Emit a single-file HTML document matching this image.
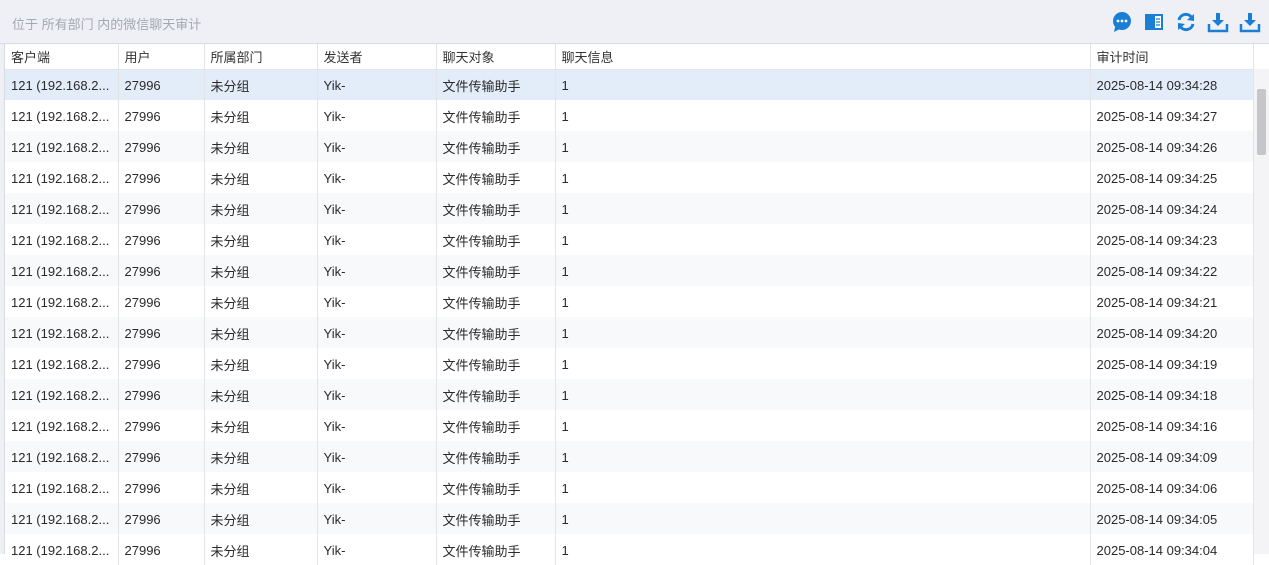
<!DOCTYPE html>
<html><head><meta charset="utf-8"><style>
*{margin:0;padding:0;box-sizing:border-box}
body{width:1269px;height:554px;overflow:hidden;background:#fff;font-family:"Liberation Sans","Noto Sans CJK SC",sans-serif;font-size:13px;color:#2a2a2a;position:relative}
.top{position:absolute;left:0;top:0;width:1269px;height:44px;background:#eef0f5;border-bottom:1px solid #d8dbe2}
.top .t{position:absolute;left:12px;top:14px;color:#a4a8b0;font-size:13px}
.icons{position:absolute;right:8px;top:11px;display:flex;gap:10px}
table{position:absolute;left:5px;top:44px;border-collapse:collapse;table-layout:fixed;width:1248px}
td,th{height:31px;white-space:nowrap;overflow:hidden;padding-left:6px;padding-top:2px;border-right:1px solid #e2e4e8;text-align:left;font-weight:normal}
th{height:25px;padding-top:0;background:#fff;border-bottom:1px solid #e2e4e8;color:#333}
tr:nth-child(even) td{background:#f8f9fb}
tr.sel td{background:#e3edf9}
.lb{position:absolute;left:0;top:44px;width:5px;height:510px;background:#eef0f5;border-right:1px solid #d8dbe2}
.sb{position:absolute;left:1254px;top:69px;width:15px;height:485px;background:#f4f4f6}
.thumb{position:absolute;left:1257px;top:89px;width:9px;height:66px;background:#c4c6ca;border-radius:2px}
</style></head><body>
<div class="top"><span class="t">位于 所有部门 内的微信聊天审计</span>
<div class="icons">
<svg width="22" height="22" viewBox="0 0 22 22"><circle cx="11" cy="10" r="9" fill="#1a7fd4"/><path d="M4 16 L3 21 L9 18Z" fill="#1a7fd4"/><circle cx="7" cy="10" r="1.4" fill="#fff"/><circle cx="11" cy="10" r="1.4" fill="#fff"/><circle cx="15" cy="10" r="1.4" fill="#fff"/></svg>
<svg width="22" height="22" viewBox="0 0 22 22"><rect x="2" y="3" width="18" height="16" fill="#1a7fd4"/><rect x="12" y="5" width="6" height="12" fill="#fff"/><path d="M13 8h4M13 11h4M13 14h4" stroke="#1a7fd4" stroke-width="1.2"/></svg>
<svg width="22" height="22" viewBox="0 0 22 22"><path d="M4 9 A7 7 0 0 1 17 7" stroke="#1a7fd4" stroke-width="3" fill="none"/><path d="M19 3 L19 10 L12 9Z" fill="#1a7fd4"/><path d="M18 13 A7 7 0 0 1 5 15" stroke="#1a7fd4" stroke-width="3" fill="none"/><path d="M3 19 L3 12 L10 13Z" fill="#1a7fd4"/></svg>
<svg width="22" height="22" viewBox="0 0 22 22"><path d="M9 2h4v7h4l-6 6-6-6h4z" fill="#1a7fd4"/><path d="M2 13v7h18v-7" stroke="#1a7fd4" stroke-width="2.5" fill="none"/></svg>
<svg width="22" height="22" viewBox="0 0 22 22"><path d="M9 2h4v7h4l-6 6-6-6h4z" fill="#1a7fd4"/><path d="M2 13v7h18v-7" stroke="#1a7fd4" stroke-width="2.5" fill="none"/></svg>
</div></div>
<div class="lb"></div>
<table>
<colgroup><col style="width:113px"><col style="width:86px"><col style="width:113px"><col style="width:119px"><col style="width:119px"><col style="width:535px"><col style="width:163px"></colgroup>
<tr><th>客户端</th><th>用户</th><th>所属部门</th><th>发送者</th><th>聊天对象</th><th>聊天信息</th><th>审计时间</th></tr>
<tr class="sel"><td>121 (192.168.2...</td><td>27996</td><td>未分组</td><td>Yik-</td><td>文件传输助手</td><td>1</td><td>2025-08-14 09:34:28</td></tr>
<tr><td>121 (192.168.2...</td><td>27996</td><td>未分组</td><td>Yik-</td><td>文件传输助手</td><td>1</td><td>2025-08-14 09:34:27</td></tr>
<tr><td>121 (192.168.2...</td><td>27996</td><td>未分组</td><td>Yik-</td><td>文件传输助手</td><td>1</td><td>2025-08-14 09:34:26</td></tr>
<tr><td>121 (192.168.2...</td><td>27996</td><td>未分组</td><td>Yik-</td><td>文件传输助手</td><td>1</td><td>2025-08-14 09:34:25</td></tr>
<tr><td>121 (192.168.2...</td><td>27996</td><td>未分组</td><td>Yik-</td><td>文件传输助手</td><td>1</td><td>2025-08-14 09:34:24</td></tr>
<tr><td>121 (192.168.2...</td><td>27996</td><td>未分组</td><td>Yik-</td><td>文件传输助手</td><td>1</td><td>2025-08-14 09:34:23</td></tr>
<tr><td>121 (192.168.2...</td><td>27996</td><td>未分组</td><td>Yik-</td><td>文件传输助手</td><td>1</td><td>2025-08-14 09:34:22</td></tr>
<tr><td>121 (192.168.2...</td><td>27996</td><td>未分组</td><td>Yik-</td><td>文件传输助手</td><td>1</td><td>2025-08-14 09:34:21</td></tr>
<tr><td>121 (192.168.2...</td><td>27996</td><td>未分组</td><td>Yik-</td><td>文件传输助手</td><td>1</td><td>2025-08-14 09:34:20</td></tr>
<tr><td>121 (192.168.2...</td><td>27996</td><td>未分组</td><td>Yik-</td><td>文件传输助手</td><td>1</td><td>2025-08-14 09:34:19</td></tr>
<tr><td>121 (192.168.2...</td><td>27996</td><td>未分组</td><td>Yik-</td><td>文件传输助手</td><td>1</td><td>2025-08-14 09:34:18</td></tr>
<tr><td>121 (192.168.2...</td><td>27996</td><td>未分组</td><td>Yik-</td><td>文件传输助手</td><td>1</td><td>2025-08-14 09:34:16</td></tr>
<tr><td>121 (192.168.2...</td><td>27996</td><td>未分组</td><td>Yik-</td><td>文件传输助手</td><td>1</td><td>2025-08-14 09:34:09</td></tr>
<tr><td>121 (192.168.2...</td><td>27996</td><td>未分组</td><td>Yik-</td><td>文件传输助手</td><td>1</td><td>2025-08-14 09:34:06</td></tr>
<tr><td>121 (192.168.2...</td><td>27996</td><td>未分组</td><td>Yik-</td><td>文件传输助手</td><td>1</td><td>2025-08-14 09:34:05</td></tr>
<tr><td>121 (192.168.2...</td><td>27996</td><td>未分组</td><td>Yik-</td><td>文件传输助手</td><td>1</td><td>2025-08-14 09:34:04</td></tr>
</table>
<div class="sb"></div><div class="thumb"></div>
</body></html>
